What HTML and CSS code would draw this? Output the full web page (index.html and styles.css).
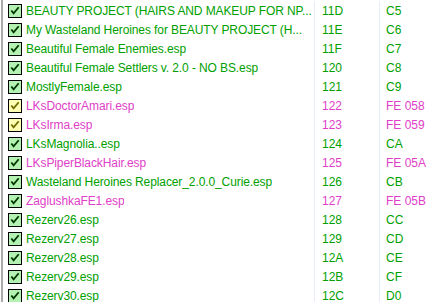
FILE: index.html
```html
<!DOCTYPE html>
<html lang="en">
<head>
  <meta charset="UTF-8" />
  <title>Plugins</title>
  <link rel="stylesheet" href="styles.css">
</head>
<body>
  <div class="plugin-list" id="list"></div>

  <script>
    const plugins = [
      { name: "BEAUTY PROJECT (HAIRS AND MAKEUP FOR NP...", index: "11D", id: "C5" },
      { name: "My Wasteland Heroines for BEAUTY PROJECT (H...", index: "11E", id: "C6" },
      { name: "Beautiful Female Enemies.esp", index: "11F", id: "C7" },
      { name: "Beautiful Female Settlers v. 2.0 - NO BS.esp", index: "120", id: "C8" },
      { name: "MostlyFemale.esp", index: "121", id: "C9" },
      { name: "LKsDoctorAmari.esp", index: "122", id: "FE 058", light: true, half: true },
      { name: "LKsIrma.esp", index: "123", id: "FE 059", light: true, half: true },
      { name: "LKsMagnolia..esp", index: "124", id: "CA" },
      { name: "LKsPiperBlackHair.esp", index: "125", id: "FE 05A", light: true },
      { name: "Wasteland Heroines Replacer_2.0.0_Curie.esp", index: "126", id: "CB" },
      { name: "ZaglushkaFE1.esp", index: "127", id: "FE 05B", light: true },
      { name: "Rezerv26.esp", index: "128", id: "CC" },
      { name: "Rezerv27.esp", index: "129", id: "CD" },
      { name: "Rezerv28.esp", index: "12A", id: "CE" },
      { name: "Rezerv29.esp", index: "12B", id: "CF" },
      { name: "Rezerv30.esp", index: "12C", id: "D0" }
    ];

    const check = '<svg viewBox="0 0 13 13" width="13" height="13"><path d="M2.5 6.5 L5 9.5 L10.5 3" fill="none" stroke-width="2"/></svg>';

    document.getElementById("list").innerHTML = plugins.map(p => `
      <div class="row ${p.light ? "light" : ""}">
        <div class="cell name">
          <span class="box ${p.half ? "half" : ""}">${check}</span>
          <span class="label">${p.name}</span>
        </div>
        <div class="cell index">${p.index}</div>
        <div class="cell form-id">${p.id}</div>
      </div>
    `).join('');
  </script>
</body>
</html>
```

FILE: styles.css
```css
body {
  margin: 0;
  background: #ffffff;
  font-family: "Liberation Sans", Arial, sans-serif;
  font-size: 12px;
  overflow: hidden;
}

.plugin-list {
  margin-left: 1px;
  padding-top: 1px;
  border-left: 2px solid #a9a9a9;
  height: 301px;
}

.row {
  display: flex;
  height: 19px;
  align-items: center;
  color: #00a000;
}

.row.light {
  color: #e040c8;
}

.cell {
  height: 100%;
  display: flex;
  align-items: center;
  white-space: nowrap;
  overflow: hidden;
}

.name {
  width: 311px;
  padding-left: 5px;
  box-sizing: border-box;
}

.label {
  overflow: hidden;
  padding-left: 4px;
  letter-spacing: -0.1px;
}

.box {
  flex: none;
  width: 14px;
  height: 14px;
  box-sizing: border-box;
  border: 1px solid #000000;
  background: #b4f2b4;
  display: flex;
  align-items: center;
  justify-content: center;
}

.box svg {
  display: block;
  stroke: #003800;
}

.box.half {
  background: #ffffb4;
}

.box.half svg {
  stroke: #6e6a00;
}

.index {
  width: 65px;
  padding-left: 7px;
  box-sizing: border-box;
  border-left: 1px solid #e6edf7;
}

.form-id {
  flex: 1;
  padding-left: 6px;
  border-left: 1px solid #e6edf7;
}
```
